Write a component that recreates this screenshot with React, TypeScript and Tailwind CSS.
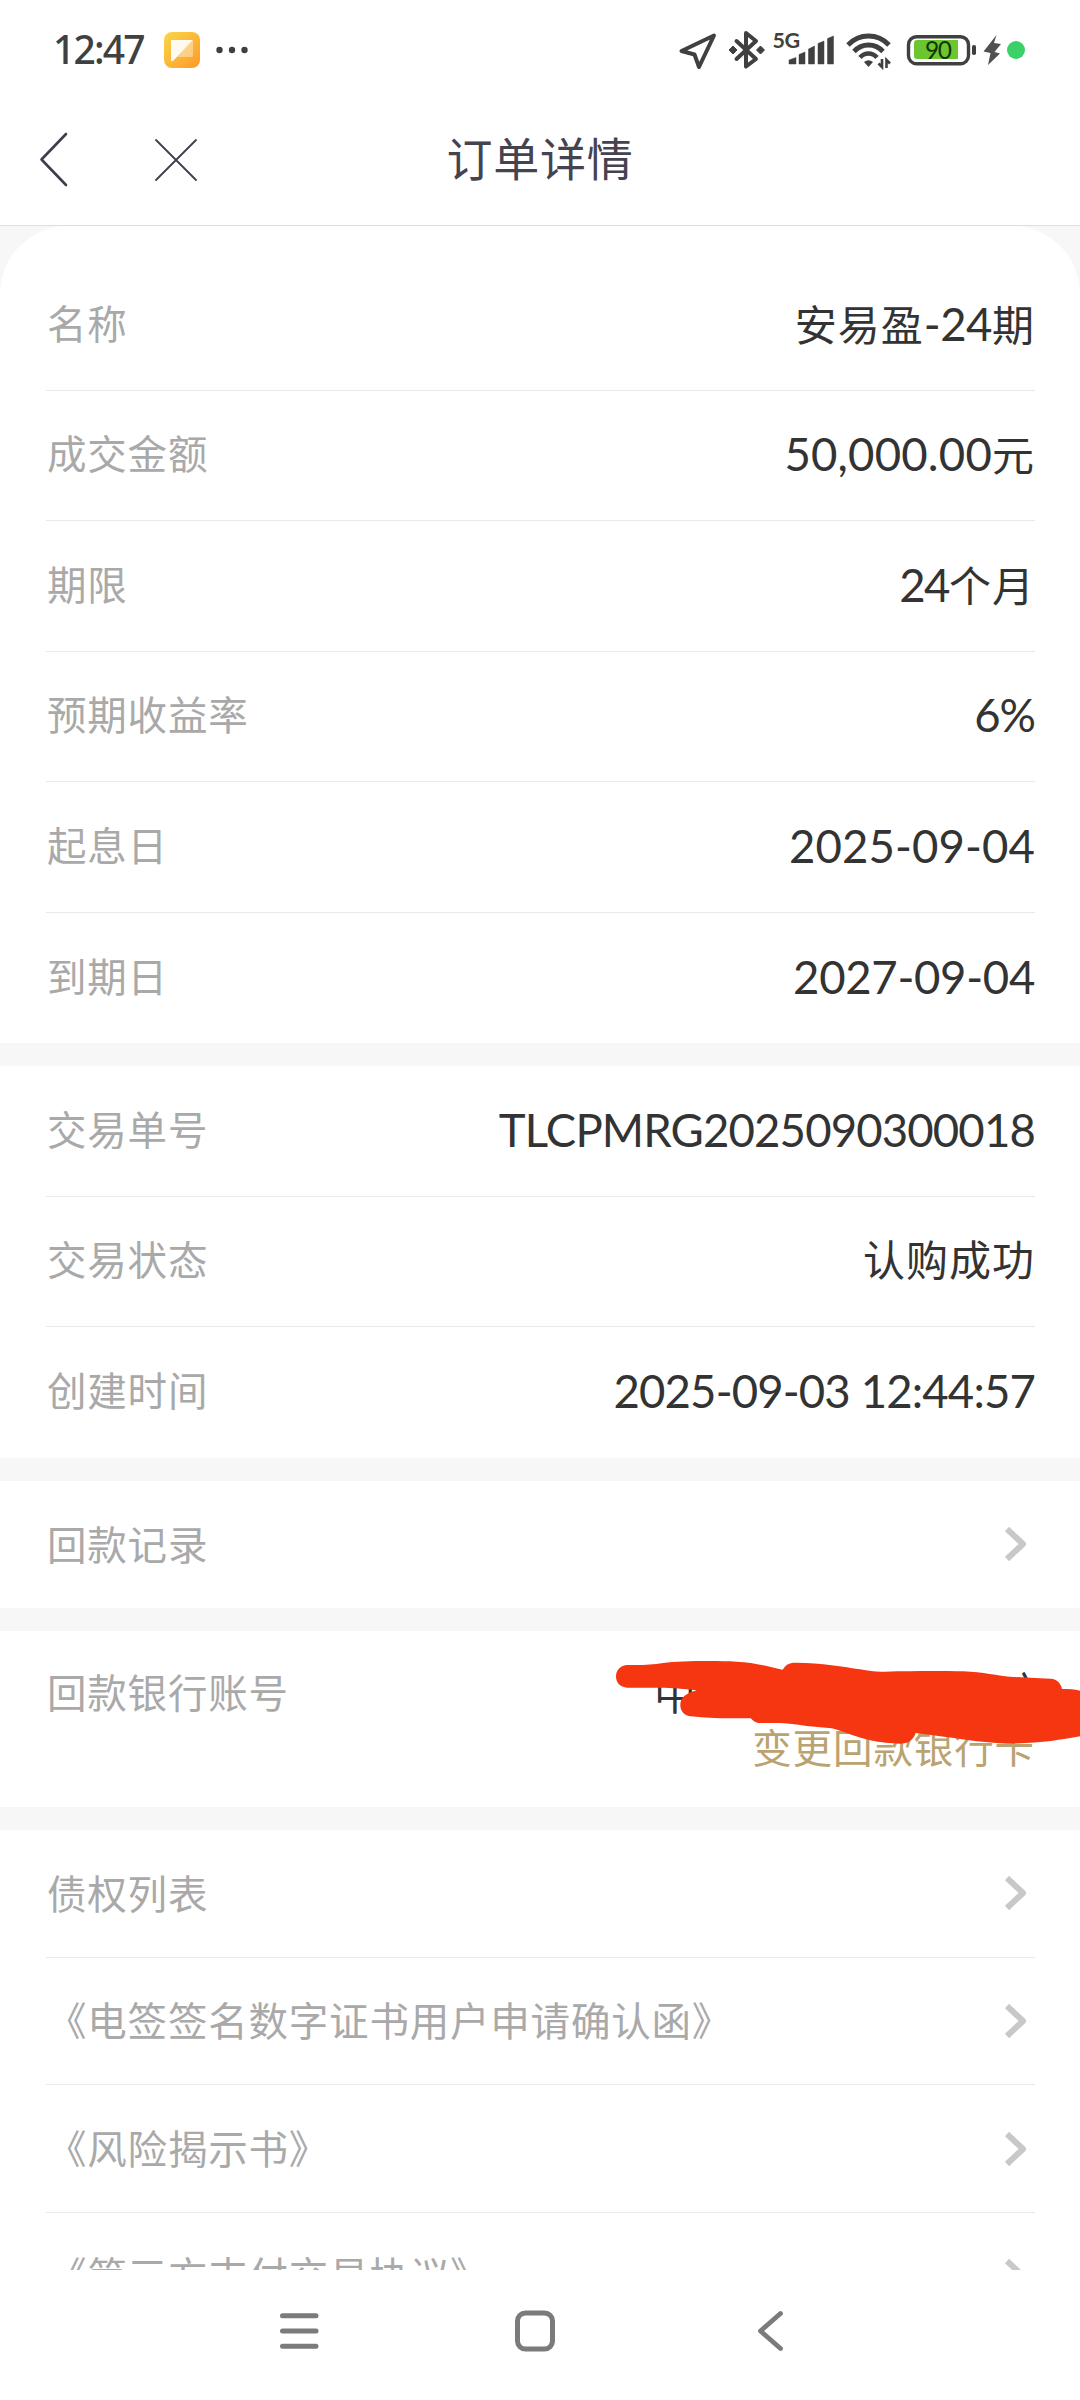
import React from 'react';

interface RowData {
    label: string;
    value: string;
    tracking: string;
}

const ORDER_ROWS: RowData[] = [
    { label: '名称', value: '安易盈-24期', tracking: 'tracking-[-0.5px]' },
    { label: '成交金额', value: '50,000.00元', tracking: 'tracking-[0.2px]' },
    { label: '期限', value: '24个月', tracking: 'tracking-[-1.5px]' },
    { label: '预期收益率', value: '6%', tracking: 'tracking-[-1px]' },
    { label: '起息日', value: '2025-09-04', tracking: 'tracking-[0.1px]' },
    { label: '到期日', value: '2027-09-04', tracking: 'tracking-[-0.3px]' },
];

const TRADE_ROWS: RowData[] = [
    { label: '交易单号', value: 'TLCPMRG2025090300018', tracking: 'tracking-[-0.85px]' },
    { label: '交易状态', value: '认购成功', tracking: 'tracking-[0px]' },
    { label: '创建时间', value: '2025-09-03 12:44:57', tracking: 'tracking-[-0.85px]' },
];

const LINKS = ['债权列表', '《电签签名数字证书用户申请确认函》', '《风险揭示书》', '《第三方支付交易协议》'];

const Label: React.FC<{ children: React.ReactNode }> = ({ children }) => (
    <span className="ml-px whitespace-nowrap text-[39.5px] leading-none tracking-[0.8px] text-[#a9a9a9]">{children}</span>
);

// Latin glyphs are set slightly larger than the Chinese ones
const Value: React.FC<{ text: string; tracking: string }> = ({ text, tracking }) => (
    <span className="flex items-baseline whitespace-pre leading-none text-[#333333]">
        {text.split(/([\u4e00-\u9fa5]+)/).filter(Boolean).map((part, i) =>
            /[\u4e00-\u9fa5]/.test(part) ? (
                <span key={i} className="text-[42px] tracking-[1px]">{part}</span>
            ) : (
                <span key={i} className={`text-[45.5px] ${tracking}`}>{part}</span>
            )
        )}
    </span>
);

const Chevron = () => (
    <svg className="mr-[5px] h-10 w-7" viewBox="0 0 28 40" fill="none" stroke="#c8c8c8" strokeWidth="6" strokeLinejoin="round">
        <path d="M5 5L21 20L5 35" />
    </svg>
);

const InfoRow: React.FC<{ row: RowData }> = ({ row }) => (
    <div className="flex h-[130.5px] items-center justify-between border-b border-[#e9e9e9] pb-[3px] last:border-b-0">
        <Label>{row.label}</Label>
        <Value text={row.value} tracking={row.tracking} />
    </div>
);

const StatusBar = () => (
    <div className="flex h-[95px] items-start pt-7 pl-[53px] text-[#404040]">
        <span className="-mt-px w-[93px] text-[39px] leading-[44px] font-medium font-['Noto_Sans','Noto_Sans_CJK_SC',sans-serif] tracking-[-1.8px]">12:47</span>
        <svg className="ml-[15px] h-11 w-[42px]" viewBox="0 0 42 44">
            <defs>
                <linearGradient id="app" x1="0" y1="0" x2="1" y2="1">
                    <stop offset="0" stopColor="#f9d649" />
                    <stop offset="1" stopColor="#fd9a28" />
                </linearGradient>
            </defs>
            <rect x="3" y="4" width="36" height="36" rx="8" fill="url(#app)" />
            <path d="M10 12H32L12 33H10Z" fill="#fff" fillOpacity="0.92" />
            <path d="M32 12V27.500Q32 29 30.500 29H16Z" fill="#fff" fillOpacity="0.4" />
        </svg>
        <svg className="ml-[12px] h-11 w-[34px]" viewBox="0 0 34 44" fill="#404040">
            <circle cx="4.500" cy="22" r="3.200" />
            <circle cx="17" cy="22" r="3.200" />
            <circle cx="29.500" cy="22" r="3.200" />
        </svg>
        <svg className="ml-[428px] h-11 w-10" viewBox="0 0 40 44" fill="none" stroke="#404040" strokeWidth="4" strokeLinejoin="round">
            <path d="M37 7.500L4.500 23L17.500 26.500L22 39Z" />
        </svg>
        <svg className="ml-[10px] h-11 w-10" viewBox="0 0 40 44">
            <path d="M9.500 13L29 31L19 38.500V5L29 13L9.500 31" fill="none" stroke="#404040" strokeWidth="4" strokeLinejoin="round" strokeLinecap="round" />
            <path d="M2 22L6 18L10 22L6 26ZM29.500 22L33.500 18L37.500 22L33.500 26Z" fill="#404040" stroke="#404040" strokeLinejoin="round" />
        </svg>
        <svg className="ml-[5px] h-11 w-16 overflow-visible" viewBox="0 0 64 44" fill="#404040">
            <text x="0.500" y="20" fontSize="21.500" fontWeight="700" fontFamily="Lato, sans-serif" textLength="27.500">5G</text>
            <path d="M17 36V32L24 29.500V36ZM27 36V26.500L33 24V36ZM36.500 36V21L42.500 18V36ZM46 36V15.500L52 13V36ZM55.500 36V10.500L61.500 8V36Z" stroke="#404040" strokeWidth="0.500" strokeLinejoin="round" />
        </svg>
        <svg className="ml-[8px] h-11 w-[50px]" viewBox="0 0 50 44" fill="none" stroke="#404040">
            <path d="M4 17Q12.500 8 24.500 8T45 17" strokeWidth="4.800" />
            <path d="M10 23.500Q16 17 24.500 17T39 23.500" strokeWidth="4.800" />
            <path d="M16 29.500Q19.500 25.500 24.500 25.500T33 29.500" strokeWidth="4.500" />
            <path d="M20 34Q24.500 30.500 29 34L24.500 39Z" fill="#404040" stroke="none" />
            <path d="M38 31V39L34.500 35.500M42.500 40V32L46 35.500" strokeWidth="2.600" />
        </svg>
        <svg className="ml-[12px] h-11 w-[72px]" viewBox="0 0 72 44">
            <rect x="2.500" y="8.700" width="60" height="27" rx="8" fill="none" stroke="#404040" strokeWidth="3.400" />
            <path d="M11 12H52V31H11Q8 31 8 28V15Q8 12 11 12Z" fill="#6bc72f" />
            <rect x="66" y="17" width="4" height="10" rx="1.800" fill="#404040" />
            <text x="32.500" y="31" textAnchor="middle" fontSize="24.500" fontFamily="Lato, sans-serif" fontWeight="400" fill="#153409" textLength="27">90</text>
        </svg>
        <svg className="ml-[5px] h-11 w-[18px]" viewBox="0 0 18 44" fill="#505050">
            <path d="M13.500 7L0.500 23.500L7.500 25L5 37L17 25.500L11.500 24L18 16L11 15Z" />
        </svg>
        <span className="mt-[13px] ml-[6px] h-[18px] w-[18px] rounded-full bg-[#3bd168]" />
    </div>
);

const NavHeader = () => (
    <div className="flex h-[131px] items-center border-b border-[#dfdfdf]">
        <div className="flex w-[216px] items-center pl-[37px]">
            <svg className="h-14 w-8" viewBox="0 0 32 56" fill="none" stroke="#3f3d4b" strokeWidth="2.600" strokeLinecap="round" strokeLinejoin="round">
                <path d="M29 2L4.500 27.500L29 53" />
            </svg>
            <svg className="ml-[85px] h-11 w-11" viewBox="0 0 44 44" fill="none" stroke="#3f3d4b" strokeWidth="1.800" strokeLinecap="round">
                <path d="M2 2L42 42M42 2L2 42" />
            </svg>
        </div>
        <h1 className="flex-1 pb-[2px] text-center text-[46px] leading-none tracking-[0.8px] text-[#45434f]">订单详情</h1>
        <div className="w-[216px]" />
    </div>
);

// Hand-drawn mask that hides the account number
const Redaction = () => (
    <svg className="absolute top-[25px] right-0 h-[90px] w-[464px]" viewBox="108 168 1392 270" fill="#f63511">
        <path d="M142 195C190 196 215 194 250 189C300 183 400 182 470 185C520 187 555 197 608 209C615 196 625 189 640 188C720 187 790 200 840 208C870 213 890 217 915 215C1000 213 1080 213 1150 214C1210 216 1250 228 1300 231L1412 236C1432 237 1443 250 1446 267C1465 267 1485 268 1500 272V409C1440 420 1380 430 1290 431C1200 429 1120 412 1007 399C1000 420 985 431 960 431C900 431 850 417 810 403C790 396 775 389 755 385C720 380 690 380 655 374C630 371 610 369 585 369H535C525 367 518 362 512 355H420C390 354 360 352 330 349C310 346 300 330 301 313C302 292 318 280 350 271C310 266 280 264 240 263H142C120 262 108 248 108 229C108 210 122 196 142 195Z" />
    </svg>
);

const BottomBar = () => (
    <div className="h-[130px] bg-white pt-[37px] pl-[276px]">
        <div className="flex items-center text-[#7b7b7b]">
            <svg className="h-12 w-12" viewBox="0 0 48 48" fill="none" stroke="currentColor" strokeWidth="5" strokeLinecap="round">
                <path d="M6.500 8.700H40M6.500 24H40M6.500 39.300H40" />
            </svg>
            <svg className="ml-[187px] h-12 w-12" viewBox="0 0 48 48" fill="none" stroke="currentColor" strokeWidth="5">
                <rect x="6.500" y="6" width="35" height="36" rx="8" />
            </svg>
            <svg className="ml-[190px] h-12 w-12" viewBox="0 0 48 48" fill="none" stroke="currentColor" strokeWidth="4.800" strokeLinecap="round" strokeLinejoin="round">
                <path d="M31.500 6.500L11.500 24L31.500 41.500" />
            </svg>
        </div>
    </div>
);

const App: React.FC = () => {
    return (
        <div className="flex h-[2400px] w-[1080px] flex-col overflow-hidden bg-white font-['Lato','Noto_Sans_CJK_SC',sans-serif]">
            <StatusBar />
            <NavHeader />
            <main className="flex min-h-0 flex-1 flex-col gap-[23px] overflow-hidden bg-[#f7f7f7]">
                <section className="shrink-0 rounded-t-[68px] bg-white pt-[34.4px] pr-[45px] pl-[46px]">
                    {ORDER_ROWS.map((row) => <InfoRow key={row.label} row={row} />)}
                </section>
                <section className="shrink-0 bg-white pr-[45px] pl-[46px]">
                    {TRADE_ROWS.map((row) => <InfoRow key={row.label} row={row} />)}
                </section>
                <section className="flex h-[127.2px] shrink-0 items-center justify-between bg-white pr-[45px] pl-[46px]">
                    <Label>回款记录</Label>
                    <Chevron />
                </section>
                <section className="relative flex h-[176px] shrink-0 justify-between bg-white pt-[42px] pr-[45px] pl-[46px]">
                    <Label>回款银行账号</Label>
                    <div className="flex w-[381px] flex-col items-end">
                        <div className="flex h-[42px] w-full justify-between text-[42px] leading-none text-[#333333]">
                            <span>中</span>
                            <span className="-mt-[5px] mr-[3px]">)</span>
                        </div>
                        <span className="mt-[13px] text-[39.5px] leading-none tracking-[0.9px] text-[#baa271]">变更回款银行卡</span>
                    </div>
                    <Redaction />
                </section>
                <section className="shrink-0 bg-white pr-[45px] pl-[46px]">
                    {LINKS.map((name) => (
                        <div key={name} className="flex h-[127.6px] items-center justify-between border-b border-[#e9e9e9]">
                            <Label>{name}</Label>
                            <Chevron />
                        </div>
                    ))}
                </section>
            </main>
            <BottomBar />
        </div>
    );
};

export default App;
